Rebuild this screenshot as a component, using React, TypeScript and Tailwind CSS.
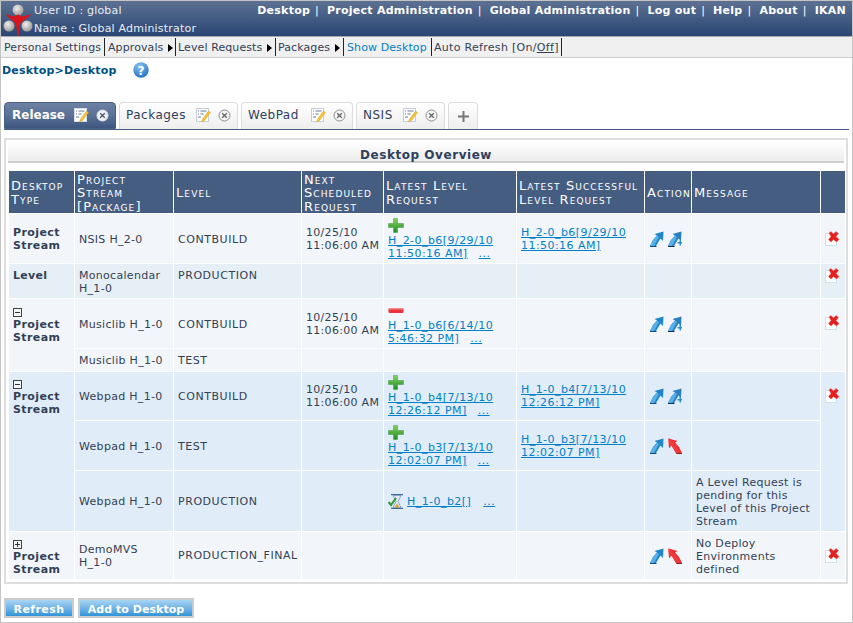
import React from 'react'

const Plus = () => (
  <svg width="16" height="15" viewBox="0 0 16 15" className="block">
    <defs>
      <linearGradient id="pg" x1="0" y1="0" x2="0" y2="1">
        <stop offset="0" stopColor="#86d35a" />
        <stop offset="1" stopColor="#1f8a2a" />
      </linearGradient>
    </defs>
    <path d="M5.500 0.500h4v5h6v4h-6v5h-4v-5h-5v-4h5z" fill="url(#pg)" stroke="#3a9a3a" strokeWidth="0.500" />
  </svg>
)

const Minus = () => (
  <svg width="16" height="15" viewBox="0 0 16 15" className="block">
    <rect x="0.500" y="5" width="15" height="5" rx="1" fill="#e8343a" />
    <rect x="1" y="5" width="14" height="1.500" fill="#f58a8a" />
  </svg>
)

const ArrowUp = ({ plus }: { plus?: boolean }) => (
  <svg width="14" height="16" viewBox="0 0 14 16" className="block">
    <path d="M0 15 L3 9 L7 4.500 L4.500 3 L13.500 0.500 L13 10 L10.500 7.500 L6 15 Z" fill={plus ? '#2a7fc0' : '#1f86cc'} />
    <path d="M0 15 L3 9 L7 4.500 L9 6 L4 15 Z" fill="#57b0e6" />
    <path d="M0 15 H7 L6 16 H0 Z" fill={plus ? '#0f2d50' : '#134d80'} />
    {plus && <path d="M9.500 11h2v-2h1.500v2h1v1.500h-1v2h-1.500v-2h-2z" fill="#2a8fd0" />}
  </svg>
)

const ArrowBack = () => (
  <svg width="14" height="16" viewBox="0 0 14 16" className="block">
    <path d="M14 15 L11 9 L7 4.500 L9.500 3 L0.500 0.500 L1 10 L3.500 7.500 L8 15 Z" fill="#ee2a2a" />
    <path d="M8 15 L3.500 7.500 L1 10 L0.500 0.500 L4 2 L9 9 L13 15 Z" fill="#f0393c" />
    <path d="M14 15 H8 L8.500 16 H14 Z" fill="#8e1a1a" />
  </svg>
)

const Delete = () => (
  <svg width="15" height="15" viewBox="0 0 15 15" className="block">
    <rect x="0.500" y="2.500" width="11" height="12" fill="#fdfeff" stroke="#cfe0ee" />
    <path d="M4 2 L6 0.500 L8.500 3 L11 0.500 L13.500 2.500 L11 5.500 L14 8.500 L11.500 11 L8.500 8.500 L6 11 L3.500 8.500 L6 5.500 Z" fill="#e2211f" stroke="#f05a50" strokeWidth="0.500" />
  </svg>
)

const Pending = () => (
  <svg width="16" height="15" viewBox="0 0 16 15" className="block">
    <path d="M3 0.500h12M3 14.500h12" stroke="#3b6ea8" strokeWidth="1.500" />
    <path d="M5 1.500h8l-3 6 3 6h-8l3-6z" fill="#dfe8f0" stroke="#6a8cb0" strokeWidth="0.700" />
    <path d="M6.500 13.500h5l-2.500-4z" fill="#e0a030" />
    <path d="M0.500 8l2.500 3 5-7" fill="none" stroke="#2f9a38" strokeWidth="2" />
  </svg>
)

const Note = ({ light }: { light?: boolean }) => (
  <svg width="15" height="15" viewBox="0 0 15 15" className="block">
    <rect x="0.500" y="0.500" width="12" height="13" fill="#fff" stroke={light ? '#c8ccd4' : '#d8dce4'} />
    <path d="M2 3h1M4.500 3h6M2 6h1M4.500 6h3M2 9h3" stroke="#5c7aa8" strokeWidth="1" />
    <path d="M5.500 14 L6.500 11 L12.500 3 L14.500 4.500 L8.500 12.500 Z" fill="#f4c236" stroke="#cf9a1c" strokeWidth="0.400" />
  </svg>
)

const CloseDot = ({ active }: { active?: boolean }) => (
  <svg width="13" height="13" viewBox="0 0 13 13" className="block">
    <circle cx="6.500" cy="6.500" r="5.500" fill={active ? '#eef0f3' : '#f4f4f4'} stroke={active ? '#dfe3e9' : '#8d8d8d'} />
    <path d="M4.200 4.200l4.600 4.600M8.800 4.200l-4.600 4.600" stroke={active ? '#4a5a72' : '#666'} strokeWidth="1.300" />
  </svg>
)

const Logo = () => (
  <svg width="32" height="33" viewBox="0 0 32 33" className="block shrink-0">
    <defs>
      <radialGradient id="ball" cx="0.400" cy="0.350" r="0.700">
        <stop offset="0" stopColor="#f0efee" />
        <stop offset="1" stopColor="#96948f" />
      </radialGradient>
    </defs>
    <circle cx="16" cy="7" r="5.500" fill="url(#ball)" />
    <circle cx="7" cy="23" r="5.500" fill="url(#ball)" />
    <circle cx="25" cy="23" r="5.500" fill="url(#ball)" />
    <path d="M3 11 L12 13.500 L16 11.500 L20 13.500 L30 11 L21 18 L18 21 L16.500 33 L15.500 33 L14 21 L11 18 Z" fill="#d8141c" />
  </svg>
)

const Help = () => (
  <svg width="16" height="16" viewBox="0 0 16 16" className="block">
    <defs>
      <radialGradient id="hg" cx="0.400" cy="0.250" r="0.800">
        <stop offset="0" stopColor="#8cc4f0" />
        <stop offset="1" stopColor="#1c6fc4" />
      </radialGradient>
    </defs>
    <circle cx="8" cy="8" r="7.700" fill="url(#hg)" />
    <text x="8" y="12.500" textAnchor="middle" fontSize="12" fontWeight="700" fill="#fff" fontFamily="DejaVu Sans">?</text>
  </svg>
)

const Toggle = ({ plus }: { plus?: boolean }) => (
  <span className="block w-[9px] h-[9px] border border-[#444] relative mb-[1px] bg-[#f5f5f5]">
    <span className="absolute left-[1px] right-[1px] top-[3px] h-[1px] bg-[#333]" />
    {plus && <span className="absolute top-[1px] bottom-[1px] left-[3px] w-[1px] bg-[#333]" />}
  </span>
)

const Req = ({ icon, line1, line2 }: { icon: React.ReactNode; line1: string; line2: string }) => (
  <div>
    {icon}
    <div className="mt-[1px] leading-[13px] text-[#0080c8] underline tracking-[0.45px]">
      {line1}
      <br />
      {line2}
      <span className="ml-[11px]">...</span>
    </div>
  </div>
)

const Lnk = ({ line1, line2 }: { line1: string; line2: string }) => (
  <div className="leading-[13px] text-[#0080c8] underline tracking-[0.45px]">
    {line1}
    <br />
    {line2}
  </div>
)

const Actions = ({ back, plus }: { back?: boolean; plus?: boolean }) => (
  <div className="flex gap-[4px] pl-[1px]">
    <ArrowUp />
    {back ? <ArrowBack /> : <ArrowUp plus={plus} />}
  </div>
)

const Type = ({ toggle }: { toggle?: 'plus' | 'minus' }) => (
  <div className="font-bold leading-[13px] tracking-[0.4px]">
    {toggle && <Toggle plus={toggle === 'plus'} />}
    Project
    <br />
    Stream
  </div>
)

const cell = 'border border-white px-[4px] py-0 align-middle tracking-[0.3px]'
const low = `${cell} pt-[2px]`
const level = 'border border-white px-[4px] py-0 align-middle tracking-[0.55px]'
const lowLevel = `${level} pt-[2px]`
const date = `${cell} whitespace-nowrap`
const headCell = 'border border-white pl-[2px] pr-0 pt-[1.5px] pb-0 align-middle text-left font-normal leading-[13.5px] text-[13px] tracking-[1.1px] whitespace-nowrap overflow-hidden text-white [font-variant:small-caps]'

const Tab = ({ name, active, w }: { name: string; active?: boolean; w: string }) => (
  <div
    className={
      active
        ? `${w} h-[27px] flex items-center rounded-t-[4px] border border-[#4a6186] bg-gradient-to-b from-[#6d81a2] via-[#5a7096] to-[#3f5780] pl-[7px] pb-[1px] text-[12px] font-bold text-white`
        : `${w} h-[27px] flex items-center rounded-t-[4px] border border-b-0 border-[#dcdcdc] bg-gradient-to-b from-white to-[#eeeeee] pl-[6px] pb-[2px] text-[12px] text-[#2f4060] tracking-[0.5px]`
    }
  >
    <span className="flex-1">{name}</span>
    <span className="flex items-center gap-[7px] pr-[6px]">
      <Note light={!active} />
      <CloseDot active={active} />
    </span>
  </div>
)

const Triangle = () => <span className="inline-block ml-[5px] w-0 h-0 border-y-[4px] border-y-transparent border-l-[5px] border-l-black" />

const Sep = ({ children, w }: { children: React.ReactNode; w: string }) => (
  <span className={`${w} h-[18px] flex items-center pt-[2px] border-r border-[#222] whitespace-nowrap`}>{children}</span>
)

const NavBar = () => <span className="font-normal ml-[5px] mr-[8px]">|</span>

export default function App() {
  return (
    <div className="w-[853px] h-[623px] border border-[#c4c4c4] bg-white overflow-hidden text-[11px] text-[#333f55] font-['DejaVu_Sans','Verdana',sans-serif]">
      <header className="h-[35px] flex items-start justify-between bg-gradient-to-b from-[#5d7192] to-[#2a4674] border-b border-[#a9a9a9] box-content">
        <div className="flex pl-[1px] pt-[2px]">
          <Logo />
          <div className="text-[#e8edf4] leading-[18px] -mt-[1px] tracking-[0.2px]">
            <div>User ID : global</div>
            <div>Name : Global Administrator</div>
          </div>
        </div>
        <nav className="flex pt-[2px] pr-[6px] text-white font-bold leading-[16px] tracking-[0.25px]">
          <span>Desktop</span><NavBar />
          <span>Project Administration</span><NavBar />
          <span>Global Administration</span><NavBar />
          <span>Log out</span><NavBar />
          <span>Help</span><NavBar />
          <span>About</span><NavBar />
          <span>IKAN</span>
        </nav>
      </header>

      <div className="h-[21px] flex items-end pb-[1px] bg-[#f0f0f0] border-b border-[#cccccc] text-[#333f55] tracking-[0.1px]">
        <Sep w="w-[104px] pl-[3px]">Personal Settings</Sep>
        <Sep w="w-[71px] pl-[3px]">Approvals<Triangle /></Sep>
        <Sep w="w-[100px] pl-[2px]">Level Requests<Triangle /></Sep>
        <Sep w="w-[68px] pl-[2px]">Packages<Triangle /></Sep>
        <Sep w="w-[88px] pl-[3px]"><span className="text-[#0080c8]">Show Desktop</span></Sep>
        <Sep w="w-[130px] pl-[2px]"><span className="tracking-[0.3px]">Auto Refresh [On/<span className="underline">Off</span>]</span></Sep>
      </div>

      <div className="h-[44px] flex items-start pl-[1px] pt-[4px]">
        <span className="font-bold text-[#005085] leading-[16px] mt-[1px] tracking-[0.2px]">Desktop&gt;Desktop</span>
        <span className="ml-[16px]"><Help /></span>
      </div>

      <div className="ml-[3px] mr-[3px] flex gap-[3px] items-end border-b border-[#465d82] h-[28px]">
        <Tab name="Release" active w="w-[112px]" />
        <Tab name="Packages" w="w-[119px]" />
        <Tab name="WebPad" w="w-[112px]" />
        <Tab name="NSIS" w="w-[89px]" />
        <div className="w-[30px] h-[27px] flex items-center justify-center rounded-t-[4px] border border-b-0 border-[#dcdcdc] bg-gradient-to-b from-white to-[#eeeeee]">
          <svg width="11" height="11" viewBox="0 0 11 11" className="block">
            <path d="M5.500 0v11M0 5.500h11" stroke="#777" strokeWidth="2" />
          </svg>
        </div>
      </div>

      <section className="ml-[3px] mr-[4px] mt-[8px] h-[446px] border-2 border-[#dedede] px-[2px] pt-[2px]">
        <div className="h-[21px] flex items-center justify-center pt-[7px] bg-gradient-to-b from-white to-[#ececec] border-b-2 border-[#cfcfcf] font-bold text-[12px] text-[#2e3f5c] tracking-[0.55px]">
          Desktop Overview
        </div>
        <table className="mt-[7px] table-fixed border-collapse w-[837px]">
          <colgroup>
            <col className="w-[66px]" />
            <col className="w-[99px]" />
            <col className="w-[128px]" />
            <col className="w-[82px]" />
            <col className="w-[133px]" />
            <col className="w-[128px]" />
            <col className="w-[47px]" />
            <col className="w-[129px]" />
            <col className="w-[25px]" />
          </colgroup>
          <thead>
            <tr className="h-[43px] bg-[#465d82]">
              <th className={headCell}>Desktop<br />Type</th>
              <th className={headCell}>Project<br />Stream<br />[Package]</th>
              <th className={headCell}>Level</th>
              <th className={headCell}>Next<br />Scheduled<br />Request</th>
              <th className={headCell}>Latest Level<br />Request</th>
              <th className={headCell}>Latest Successful<br />Level Request</th>
              <th className={headCell}>Action</th>
              <th className={headCell}>Message</th>
              <th className={headCell}></th>
            </tr>
          </thead>
          <tbody className="leading-[13px]">
            <tr className="h-[50px] bg-[#f2f6fb]">
              <td className={cell}><Type /></td>
              <td className={low}>NSIS H_2-0</td>
              <td className={lowLevel}>CONTBUILD</td>
              <td className={date}>10/25/10<br />11:06:00 AM</td>
              <td className={cell}><Req icon={<Plus />} line1="H_2-0_b6[9/29/10" line2="11:50:16 AM]" /></td>
              <td className={cell}><Lnk line1="H_2-0_b6[9/29/10" line2="11:50:16 AM]" /></td>
              <td className={cell}><Actions plus /></td>
              <td className={cell}></td>
              <td className={cell}><Delete /></td>
            </tr>
            <tr className="h-[35px] bg-[#e6eff6]">
              <td className={`${cell} !align-top pt-[5px] font-bold`}>Level</td>
              <td className={low}>Monocalendar<br />H_1-0</td>
              <td className={`${level} !align-top pt-[5px]`}>PRODUCTION</td>
              <td className={cell}></td>
              <td className={cell}></td>
              <td className={cell}></td>
              <td className={cell}></td>
              <td className={cell}></td>
              <td className={`${cell} !align-top pt-[4px]`}><Delete /></td>
            </tr>
            <tr className="h-[50px] bg-[#f2f6fb]">
              <td rowSpan={2} className={`${cell} !align-top pt-[9px]`}><Type toggle="minus" /></td>
              <td className={low}>Musiclib H_1-0</td>
              <td className={lowLevel}>CONTBUILD</td>
              <td className={date}>10/25/10<br />11:06:00 AM</td>
              <td className={cell}><Req icon={<Minus />} line1="H_1-0_b6[6/14/10" line2="5:46:32 PM]" /></td>
              <td className={cell}></td>
              <td className={cell}><Actions plus /></td>
              <td className={cell}></td>
              <td rowSpan={2} className={`${cell} !align-top pt-[16px]`}><Delete /></td>
            </tr>
            <tr className="h-[23px] bg-[#f2f6fb]">
              <td className={cell}>Musiclib H_1-0</td>
              <td className={level}>TEST</td>
              <td className={cell}></td>
              <td className={cell}></td>
              <td className={cell}></td>
              <td className={cell}></td>
              <td className={cell}></td>
            </tr>
            <tr className="h-[49px] bg-[#e0edf9]">
              <td rowSpan={3} className={`${cell} !align-top pt-[8px]`}><Type toggle="minus" /></td>
              <td className={cell}>Webpad H_1-0</td>
              <td className={level}>CONTBUILD</td>
              <td className={date}>10/25/10<br />11:06:00 AM</td>
              <td className={cell}><Req icon={<Plus />} line1="H_1-0_b4[7/13/10" line2="12:26:12 PM]" /></td>
              <td className={cell}><Lnk line1="H_1-0_b4[7/13/10" line2="12:26:12 PM]" /></td>
              <td className={cell}><Actions plus /></td>
              <td className={cell}></td>
              <td rowSpan={3} className={`${cell} !align-top pt-[16px]`}><Delete /></td>
            </tr>
            <tr className="h-[50px] bg-[#e0edf9]">
              <td className={low}>Webpad H_1-0</td>
              <td className={lowLevel}>TEST</td>
              <td className={cell}></td>
              <td className={cell}><Req icon={<Plus />} line1="H_1-0_b3[7/13/10" line2="12:02:07 PM]" /></td>
              <td className={cell}><Lnk line1="H_1-0_b3[7/13/10" line2="12:02:07 PM]" /></td>
              <td className={cell}><Actions back /></td>
              <td className={cell}></td>
            </tr>
            <tr className="h-[61px] bg-[#e0edf9]">
              <td className={cell}>Webpad H_1-0</td>
              <td className={level}>PRODUCTION</td>
              <td className={cell}></td>
              <td className={cell}>
                <div className="flex items-center gap-[3px] text-[#0080c8] underline tracking-[0.45px]">
                  <Pending />
                  <span>H_1-0_b2[]</span>
                  <span className="ml-[9px]">...</span>
                </div>
              </td>
              <td className={cell}></td>
              <td className={cell}></td>
              <td className={low}>A Level Request is<br />pending for this<br />Level of this Project<br />Stream</td>
            </tr>
            <tr className="h-[48px] bg-[#f2f6fb]">
              <td className={`${cell} !align-top pt-[8px]`}><Type toggle="plus" /></td>
              <td className={cell}>DemoMVS<br />H_1-0</td>
              <td className={level}>PRODUCTION_FINAL</td>
              <td className={cell}></td>
              <td className={cell}></td>
              <td className={cell}></td>
              <td className={cell}><Actions back /></td>
              <td className={low}>No Deploy<br />Environments<br />defined</td>
              <td className={cell}><Delete /></td>
            </tr>
          </tbody>
        </table>
      </section>

      <div className="flex gap-[4px] ml-[3px] mt-[14px]">
        <button className="w-[70px] h-[20px] pt-[2px] border-2 border-[#cccccc] bg-gradient-to-b from-[#a8d4f2] to-[#2f94d8] text-white font-bold tracking-[0.4px] leading-none">Refresh</button>
        <button className="w-[116px] h-[20px] pt-[2px] border-2 border-[#cccccc] bg-gradient-to-b from-[#a8d4f2] to-[#2f94d8] text-white font-bold tracking-[0.05px] leading-none">Add to Desktop</button>
      </div>
    </div>
  )
}
